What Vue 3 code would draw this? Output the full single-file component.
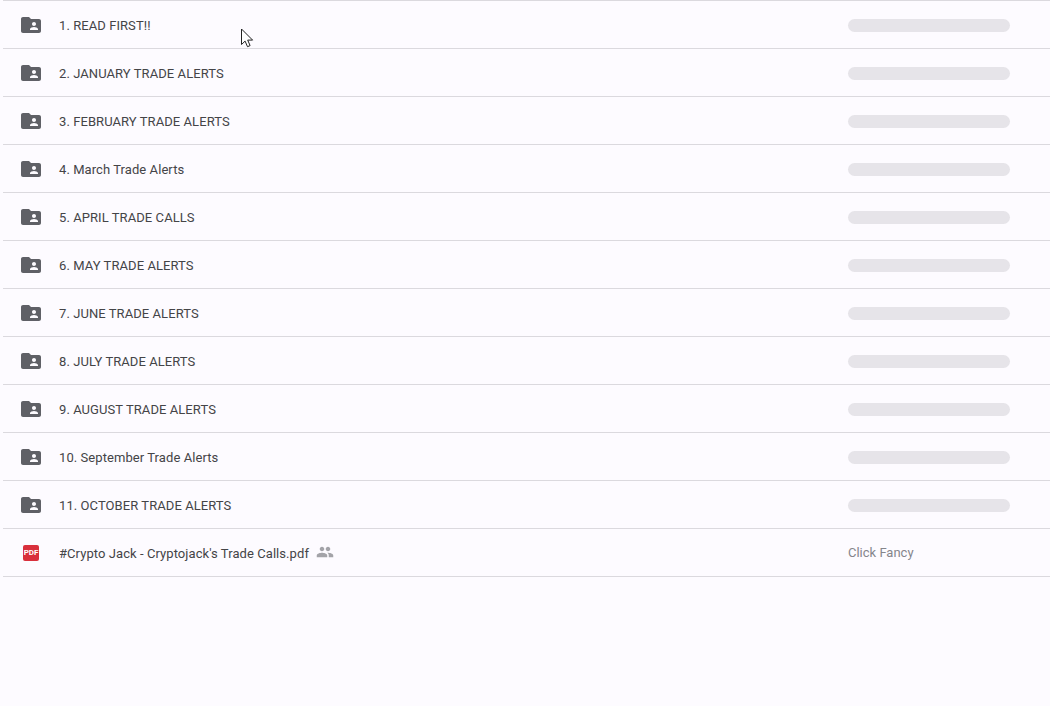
<script setup>
const folders = [
  '1. READ FIRST!!',
  '2. JANUARY TRADE ALERTS',
  '3. FEBRUARY TRADE ALERTS',
  '4. March Trade Alerts',
  '5. APRIL TRADE CALLS',
  '6. MAY TRADE ALERTS',
  '7. JUNE TRADE ALERTS',
  '8. JULY TRADE ALERTS',
  '9. AUGUST TRADE ALERTS',
  '10. September Trade Alerts',
  '11. OCTOBER TRADE ALERTS',
]
</script>

<template>
  <main class="page">
    <ul class="list">
      <li v-for="name in folders" :key="name" class="row">
        <span class="icon">
          <svg width="24" height="24" viewBox="0 0 24 24"><path fill="#5f6066" d="M20 6h-8l-2-2H4c-1.1 0-1.99.9-1.99 2L2 18c0 1.1.9 2 2 2h16c1.1 0 2-.9 2-2V8c0-1.1-.9-2-2-2zm-5 3c1.1 0 2 .9 2 2s-.9 2-2 2-2-.9-2-2 .9-2 2-2zm4 8h-8v-1c0-1.33 2.67-2 4-2s4 .67 4 2v1z"/></svg>
        </span>
        <span class="name"><span class="label">{{ name }}</span></span>
        <span class="meta"><span class="skeleton"></span></span>
      </li>
      <li class="row">
        <span class="icon"><span class="pdf">PDF</span></span>
        <span class="name"><span class="label">#Crypto Jack - Cryptojack's Trade Calls.pdf</span>
          <svg class="shared" width="18" height="18" viewBox="0 0 24 24"><path fill="#a3a3a8" d="M16 11c1.66 0 2.99-1.34 2.99-3S17.66 5 16 5s-3 1.34-3 3 1.34 3 3 3zm-8 0c1.66 0 2.99-1.34 2.99-3S9.66 5 8 5 5 6.34 5 8s1.34 3 3 3zm0 2c-2.33 0-7 1.17-7 3.5V19h14v-2.5C15 14.17 10.33 13 8 13zm8 0c-.29 0-.62.02-.97.05 1.16.84 1.97 1.97 1.97 3.45V19h6v-2.5c0-2.33-4.67-3.5-7-3.5z"/></svg>
        </span>
        <span class="meta owner">Click Fancy</span>
      </li>
    </ul>
    <svg class="cursor" width="14" height="21" viewBox="0 0 14 21"><path fill="#fff" stroke="#222" stroke-width="1" stroke-linejoin="round" d="M1.5 1v15.5l3.6-3.4 2.4 5.6 2.6-1.1-2.4-5.5h4.9z"/></svg>
  </main>
</template>

<style scoped>
.page {
  position: relative;
  width: 1050px;
  height: 706px;
  overflow: hidden;
  background: #fdfbff;
  font-family: Roboto, "Liberation Sans", sans-serif;
}
.list {
  list-style: none;
  margin: 0;
  padding: 0 0 0 3px;
}
.row {
  box-sizing: border-box;
  height: 48px;
  display: flex;
  align-items: center;
  border-top: 1px solid #dbd9de;
}
.row:last-child {
  height: 49px;
  border-bottom: 1px solid #dbd9de;
}
.icon {
  width: 24px;
  height: 24px;
  margin: 0 16px;
  display: flex;
  align-items: center;
  justify-content: center;
}
.name {
  flex: 1;
  display: flex;
  align-items: center;
  gap: 7px;
  font-size: 13px;
  font-weight: 400;
  letter-spacing: 0.07px;
  color: #444447;
  white-space: pre;
}
.label {
  padding-top: 2px;
}
.meta {
  width: 202px;
  flex: none;
  padding-top: 2px;
}
.skeleton {
  display: block;
  width: 162px;
  height: 13px;
  border-radius: 7px;
  background: #e6e4e9;
}
.owner {
  padding-top: 0;
  font-size: 13px;
  color: #85858c;
}
.pdf {
  width: 16px;
  height: 16px;
  border-radius: 2px;
  background: #d9303c;
  color: #fff;
  font: 700 8px/16px Roboto, sans-serif;
  text-align: center;
}
.shared {
  flex: none;
  margin-bottom: 2px;
}
.cursor {
  position: absolute;
  left: 240px;
  top: 28px;
}
</style>
